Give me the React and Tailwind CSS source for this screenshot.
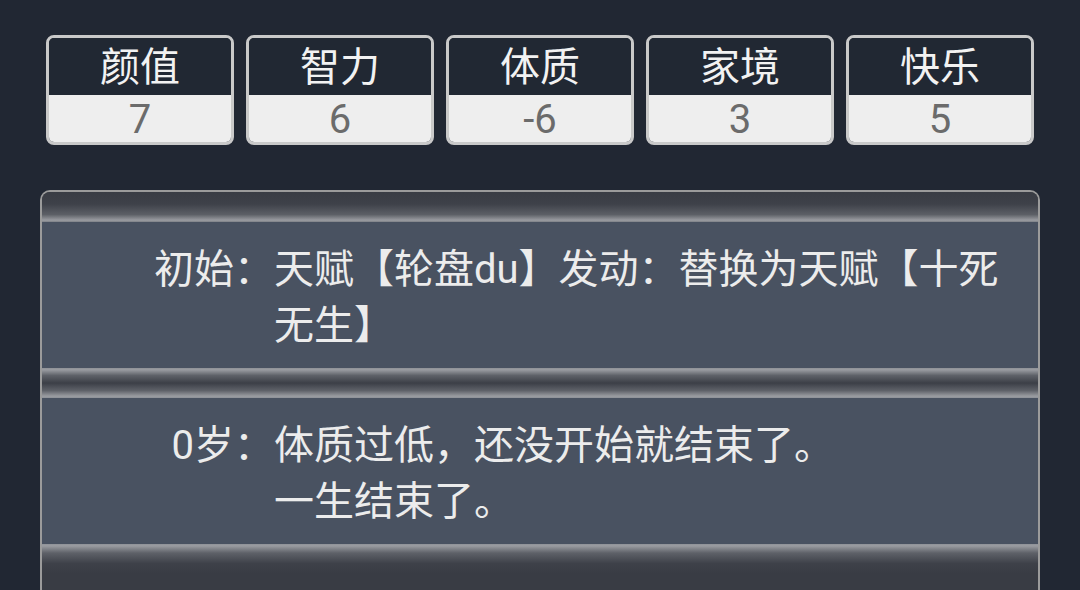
import React from "react";

const stats = [
  { label: "颜值", value: "7" },
  { label: "智力", value: "6" },
  { label: "体质", value: "-6" },
  { label: "家境", value: "3" },
  { label: "快乐", value: "5" },
];

const rows = [
  { label: "初始：", text: "天赋【轮盘du】发动：替换为天赋【十死无生】" },
  { label: "0岁：", text: "体质过低，还没开始就结束了。\n一生结束了。" },
];

function Sep({ kind }) {
  if (kind === "top")
    return (
      <div className="h-[30px] bg-[linear-gradient(to_bottom,#393c44_0%,#3e4149_40%,#5c5f66_75%,#9a9ca1_94%,#7d8087_100%)]" />
    );
  if (kind === "bottom")
    return (
      <div className="h-[30px] bg-[linear-gradient(to_bottom,#8e9197_0%,#9a9ca1_6%,#5e6168_30%,#3e4149_65%,#393c44_100%)]" />
    );
  return (
    <div className="h-[30px] bg-[linear-gradient(to_bottom,#8e9197_0%,#9a9ca1_6%,#5e6168_25%,#3c3f47_50%,#5e6168_75%,#9a9ca1_94%,#8e9197_100%)]" />
  );
}

export default function App() {
  return (
    <div
      className="w-[1080px] h-[590px] overflow-hidden bg-[#212733]"
      style={{ fontFamily: '"Roboto", "Noto Sans CJK SC", sans-serif' }}
    >
      <div className="flex gap-[12px] pl-[46px] pt-[35px]">
        {stats.map((s) => (
          <div
            key={s.label}
            className="w-[188px] h-[110px] flex flex-col border-[3px] border-[#c9c9c9] rounded-[8px] overflow-hidden"
          >
            <div className="h-[57px] flex items-center justify-center pt-[3px] bg-[#212833] text-[40px] text-[#f2f2f2] leading-none">
              {s.label}
            </div>
            <div className="flex-1 flex items-center justify-center pt-[3px] bg-[#eeeeee] text-[40px] text-[#6b6b6b] leading-none">
              {s.value}
            </div>
          </div>
        ))}
      </div>

      <div className="ml-[40px] mt-[45px] w-[1000px] h-[420px] border-[2px] border-b-0 border-[#9b9b9b] rounded-t-[10px] overflow-hidden bg-[#393c44]">
        <Sep kind="top" />
        {rows.map((r, i) => (
          <React.Fragment key={i}>
            <div className="flex bg-[#495261] pt-[20px] pb-[14px] text-[40px] leading-[56px] text-[#ececec]">
              <div className="w-[232px] shrink-0 text-right">{r.label}</div>
              <div className="flex-1 pr-[20px] whitespace-pre-line">{r.text}</div>
            </div>
            <Sep kind={i === rows.length - 1 ? "bottom" : "mid"} />
          </React.Fragment>
        ))}
      </div>
    </div>
  );
}
